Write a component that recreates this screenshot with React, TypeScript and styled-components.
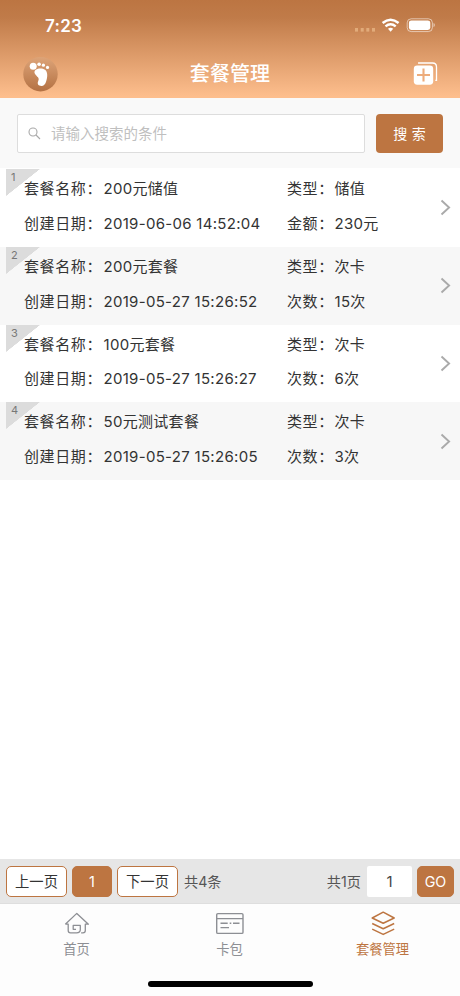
import React from "react";
import styled, { createGlobalStyle } from "styled-components";

const BROWN = "#bd7541";

const Global = createGlobalStyle`
  * { box-sizing: border-box; }
  body { margin: 0; background: #fff; }
  button, input { font: inherit; margin: 0; padding: 0; }
`;

const Screen = styled.div`
  width: 460px;
  height: 996px;
  display: flex;
  flex-direction: column;
  background: #fff;
  color: #333;
  overflow: hidden;
  font-family: Inter, "Noto Sans CJK SC", sans-serif;
`;

const Header = styled.header`
  height: 98px;
  flex: none;
  background: linear-gradient(#bc7542 0%, #c07b49 18%, #fdbe8d 98%);
  color: #fff;
`;

const StatusBar = styled.div`
  height: 50px;
  padding: 0 25px 0 45px;
  display: flex;
  align-items: center;
  justify-content: space-between;
`;

const Clock = styled.span`
  font-size: 17px;
  font-weight: 600;
  line-height: 20px;
  letter-spacing: 0.25px;
  padding-top: 1px;
`;

const TitleBar = styled.div`
  height: 48px;
  padding: 0 22px 0 23px;
  display: grid;
  grid-template-columns: 35px 1fr 35px;
  align-items: center;
`;

const Title = styled.h1`
  margin: 0;
  text-align: center;
  font-size: 20px;
  line-height: 30px;
  font-weight: 500;
  letter-spacing: 0.1px;
  padding-right: 1px;
`;

const IconButton = styled.button`
  border: 0;
  background: none;
  display: flex;
  justify-content: flex-end;
`;

const SearchBar = styled.form`
  height: 70px;
  flex: none;
  background: #f9f9f9;
  padding: 16px 17px 0;
  display: flex;
  gap: 11px;
`;

const SearchField = styled.label`
  width: 348px;
  height: 39px;
  display: flex;
  align-items: center;
  gap: 10px;
  padding-left: 10px;
  background: #fff;
  border: 1px solid #ddd;
  border-radius: 2px;
`;

const SearchInput = styled.input`
  flex: 1;
  min-width: 0;
  border: 0;
  outline: 0;
  background: transparent;
  font-size: 14.5px;
  color: #333;
  &::placeholder { color: #bfbfbf; opacity: 1; }
`;

const SearchButton = styled.button`
  width: 67px;
  height: 39px;
  padding-bottom: 2px;
  border: 0;
  border-radius: 4px;
  background: ${BROWN};
  color: #fff;
  font-size: 14px;
  word-spacing: 0.5px;
`;

const List = styled.ul`
  margin: 0;
  padding: 1px 0 0;
  flex: 1;
  list-style: none;
`;

const Item = styled.li`
  position: relative;
  height: 77.75px;
  padding: 0 8px 0 24px;
  display: grid;
  grid-template-columns: 263px 1fr 12px;
  align-items: center;
  background: #fff;
  &:nth-child(even) { background: #f7f7f7; }
`;

const Corner = styled.span`
  position: absolute;
  left: 6px;
  top: 0;
  width: 34px;
  height: 27px;
  padding-left: 5px;
  background: linear-gradient(to bottom right, #dcdcdc 49.5%, transparent 50.5%);
  color: #777;
  font-size: 11px;
  line-height: 17px;
`;

const Column = styled.div`
  height: 72px;
  display: grid;
  grid-template-rows: 34.6px 34.6px;
`;

const Field = styled.div<{ $label: number }>`
  display: grid;
  grid-template-columns: ${(p) => p.$label}px 1fr;
  align-items: center;
  font-size: 15px;
  line-height: 22px;
  letter-spacing: 0.6px;
  white-space: nowrap;
`;

const Value = styled.span`
  letter-spacing: 0.3px;
`;

const Pager = styled.div`
  height: 45px;
  flex: none;
  background: #e6e6e6;
  padding: 0 6px;
  display: flex;
  align-items: center;
  border-bottom: 1px solid #dedede;
`;

const PageButton = styled.button<{ $width: number; $solid?: boolean; $gap?: number }>`
  width: ${(p) => p.$width}px;
  height: 31px;
  margin-right: ${(p) => p.$gap ?? 0}px;
  padding-top: 1px;
  border: 1px solid ${BROWN};
  border-radius: 5px;
  background: ${(p) => (p.$solid ? BROWN : "#fff")};
  color: ${(p) => (p.$solid ? "#fff" : "#333")};
  font-size: 14.3px;
  line-height: 20px;
`;

const Total = styled.span`
  font-size: 14.2px;
  color: #555;
`;

const PageInput = styled.input`
  width: 45px;
  height: 31px;
  margin: 0 5px 0 6px;
  border: 0;
  border-radius: 2px;
  background: #fff;
  color: #444;
  text-align: center;
  font-size: 15px;
`;

const Spacer = styled.span`
  flex: 1;
`;

const TabBar = styled.nav`
  height: 92px;
  flex: none;
  background: #fdfdfd;
  display: flex;
  flex-direction: column;
  align-items: center;
`;

const Tabs = styled.div`
  width: 459px;
  margin-right: 1px;
  height: 77px;
  display: grid;
  grid-template-columns: repeat(3, 1fr);
`;

const Tab = styled.a<{ $active?: boolean }>`
  display: flex;
  flex-direction: column;
  align-items: center;
  padding-top: 6px;
  gap: 2px;
  color: ${(p) => (p.$active ? BROWN : "#8d8f94")};
  font-size: 13.3px;
  line-height: 20px;
`;

const HomeIndicator = styled.div`
  width: 165px;
  height: 6px;
  border-radius: 3px;
  background: #000;
`;

const StatusIcons = () => (
  <svg width="82" height="20" viewBox="0 0 82 20" fill="none">
    <g fill="#ffd9a8" fillOpacity=".45">
      <rect x="2" y="13" width="3" height="3.6" /><rect x="7.7" y="13" width="3" height="3.6" />
      <rect x="13.3" y="13" width="3" height="3.6" /><rect x="19" y="13" width="3" height="3.6" />
    </g>
    <g stroke="#fff" strokeWidth="2.5">
      <path d="M29.6 8Q37.6 1.4 45.6 8" />
      <path d="M32.5 11.4Q37.6 7.2 42.7 11.4" />
    </g>
    <path d="M35 13.8Q37.6 11.6 40.2 13.8L37.6 16.8Z" fill="#fff" />
    <rect x="54.2" y="3.8" width="25.2" height="12.8" rx="4" stroke="#fff" strokeOpacity=".55" />
    <rect x="55.9" y="5.4" width="21.4" height="9.6" rx="2.4" fill="#fff" />
    <path d="M80.5 8v4.2q1.4-.6 1.4-2.1t-1.4-2.1Z" fill="#fff" fillOpacity=".55" />
  </svg>
);

const FootLogo = () => (
  <svg width="35" height="35" viewBox="0 0 35 35">
    <defs>
      <linearGradient id="logoFill" x1="0" y1="0" x2="0" y2="1">
        <stop offset="0" stopColor="#dda478" />
        <stop offset="1" stopColor="#b47143" />
      </linearGradient>
    </defs>
    <circle cx="17.5" cy="17.2" r="17.2" fill="url(#logoFill)" />
    <g fill="#fff">
      <circle cx="10.2" cy="9.3" r="3.5" />
      <circle cx="16.1" cy="7.3" r="1.8" />
      <circle cx="20.4" cy="8.2" r="1.6" />
      <circle cx="24.5" cy="10.4" r="1.6" />
      <path d="M12.2 13.2C14.2 11.2 19.2 10.7 22 12.8C24.6 14.8 24.6 18.7 23.8 22.1C23 25.6 21.9 28.7 18.9 29C15.6 29.2 14.1 27.1 15 24.8C15.6 23.1 16.2 21.9 15 20.3C13.4 18.5 9.9 15.8 12.2 13.2Z" />
    </g>
  </svg>
);

const AddIcon = () => (
  <svg width="25" height="24" viewBox="0 0 25 24" fill="none">
    <path d="M5.7 1.7V1H19.5Q23.5 1 23.5 5V18.4H22.3" stroke="#fff" strokeWidth="1.3" />
    <rect x=".8" y="3.5" width="19.4" height="19.2" rx="3.4" fill="#fff" />
    <path d="M10.5 6.6V19.5M4 13H17" stroke="#edac7b" strokeWidth="2.1" />
  </svg>
);

const SearchIcon = () => (
  <svg width="13" height="13" viewBox="0 0 13 13" fill="none" stroke="#a8a8a8" strokeWidth="1.1">
    <circle cx="5" cy="5" r="4" />
    <path d="M8 8L12 12" />
  </svg>
);

const Chevron = () => (
  <svg width="12" height="17" viewBox="0 0 12 17" fill="none" stroke="#aaa" strokeWidth="1.9">
    <path d="M1.5 1.5L9.1 8.5L1.5 15.5" />
  </svg>
);

const iconProps = { width: 30, height: 27, viewBox: "0 0 30 27", fill: "none", stroke: "currentColor" };

const HomeIcon = () => (
  <svg {...iconProps} strokeWidth="1.3" strokeLinejoin="round">
    <path d="M3.3 14.2L14.8 3.4L26.4 14.2H23.3V20.5Q23.3 22.8 21 22.8H19.1M3.3 14.2H6.2V20.5Q6.2 22.8 8.5 22.8H14.5Q18.3 22.8 18.3 19.5V15.4H11.2V19.3H14" />
  </svg>
);

const CardIcon = () => (
  <svg {...iconProps} strokeWidth="1.4">
    <rect x="1.7" y="3.6" width="26.3" height="19.8" rx="1.2" />
    <path d="M2 8.6H28M5.5 13.2H12.7M14.7 13.2H16.3M18 13.2H24.5M5.5 17.6H14" />
  </svg>
);

const LayersIcon = () => (
  <svg {...iconProps} strokeWidth="1.5" strokeLinejoin="round">
    <path d="M15.2 2.2L26.2 8L15.2 13.2L4.2 8Z" />
    <path d="M4.2 13.5L15.2 18.8L26.2 13.5M4.2 19.1L15.2 24.4L26.2 19.1" />
  </svg>
);

const packages = [
  { name: "200元储值", date: "2019-06-06 14:52:04", type: "储值", unit: "金额：", amount: "230元" },
  { name: "200元套餐", date: "2019-05-27 15:26:52", type: "次卡", unit: "次数：", amount: "15次" },
  { name: "100元套餐", date: "2019-05-27 15:26:27", type: "次卡", unit: "次数：", amount: "6次" },
  { name: "50元测试套餐", date: "2019-05-27 15:26:05", type: "次卡", unit: "次数：", amount: "3次" },
];

export default function App() {
  return (
    <Screen>
      <Global />
      <Header>
        <StatusBar>
          <Clock>7:23</Clock>
          <StatusIcons />
        </StatusBar>
        <TitleBar>
          <FootLogo />
          <Title>套餐管理</Title>
          <IconButton><AddIcon /></IconButton>
        </TitleBar>
      </Header>
      <SearchBar>
        <SearchField>
          <SearchIcon />
          <SearchInput placeholder="请输入搜索的条件" />
        </SearchField>
        <SearchButton type="button">搜 索</SearchButton>
      </SearchBar>
      <List>
        {packages.map((p, i) => (
          <Item key={i}>
            <Corner>{i + 1}</Corner>
            <Column>
              <Field $label={79.5}>套餐名称：<Value>{p.name}</Value></Field>
              <Field $label={79.5}>创建日期：<Value>{p.date}</Value></Field>
            </Column>
            <Column>
              <Field $label={47.5}>类型：<Value>{p.type}</Value></Field>
              <Field $label={47.5}>{p.unit}<Value>{p.amount}</Value></Field>
            </Column>
            <Chevron />
          </Item>
        ))}
      </List>
      <Pager>
        <PageButton $width={61} $gap={5}>上一页</PageButton>
        <PageButton $width={40} $gap={5} $solid>1</PageButton>
        <PageButton $width={61} $gap={6}>下一页</PageButton>
        <Total>共4条</Total>
        <Spacer />
        <Total>共1页</Total>
        <PageInput defaultValue="1" />
        <PageButton $width={37} $solid>GO</PageButton>
      </Pager>
      <TabBar>
        <Tabs>
          <Tab><HomeIcon />首页</Tab>
          <Tab><CardIcon />卡包</Tab>
          <Tab $active><LayersIcon />套餐管理</Tab>
        </Tabs>
        <HomeIndicator />
      </TabBar>
    </Screen>
  );
}
